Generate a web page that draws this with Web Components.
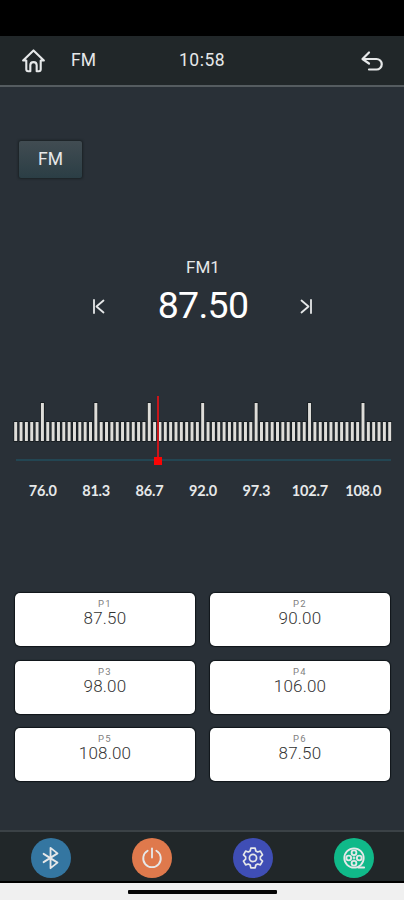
<!DOCTYPE html>
<html lang="en">
<head>
<meta charset="UTF-8">
<meta name="viewport" content="width=device-width, initial-scale=1">
<title>FM Radio</title>
<style>
  :root {
    --panel: #293037;
    --bar: #212729;
    --rule: #555c60;
    --text: #e6e8e9;
  }

  body {
    margin: 0;
    background: #000;
    font-family: Roboto, 'Liberation Sans', sans-serif;
    color: var(--text);
  }
</style>
</head>
<body>
<radio-app></radio-app>

<script>
function attach(el, html) {
  const template = document.createElement('template');
  template.innerHTML = html;
  el.attachShadow({ mode: 'open' }).appendChild(template.content.cloneNode(true));
}

const icons = {
  home: '<path d="M5.500 12.500H2.200L13 2l10.800 10.500h-3.300v9.200q0 2-2 2h-2.200v-6.200q0-3.300-3.300-3.300t-3.300 3.300v6.200H7.500q-2 0-2-2z"/>',
  back: '<path d="M9 2.500 2.500 9 9 13.500M3 9h13.500a5 5 0 0 1 0 10.500H9"/>',
  prev: '<path d="M2 1v13M11.500 1.500 4.500 7.500l7 6"/>',
  next: '<path d="M11 1v13M1.500 1.500l7 6-7 6"/>',
  bluetooth: '<path d="m5 8.500 15 9.500-7.500 6V2L20 8 5 17.500"/>',
  power: '<path d="M13 2.500v10M8.300 5.200a9.500 9.500 0 1 0 9.400 0"/>',
  gear: '<path d="M10.500 2.500h5l.8 3.300 2.100 1.200 3.200-1 2.500 4.300-2.500 2.300v2.800l2.500 2.300-2.500 4.300-3.200-1-2.100 1.200-.8 3.300h-5l-.8-3.300-2.100-1.200-3.200 1-2.500-4.300 2.500-2.300v-2.800l-2.500-2.300L4.400 6l3.200 1 2.100-1.200z"/><circle cx="13" cy="14" r="4.200"/>',
  reel: '<circle cx="13" cy="13" r="10.500"/><circle cx="13" cy="7.300" r="2.600"/><circle cx="7.300" cy="13" r="2.600"/><circle cx="18.700" cy="13" r="2.600"/><circle cx="13" cy="18.700" r="2.600"/><circle cx="13" cy="13" r=".5"/><path d="M17.500 23.300h6.500"/>'
};

class RadioIcon extends HTMLElement {
  connectedCallback() {
    const box = this.getAttribute('box') || '0 0 26 26';
    attach(this, `
      <style>
        :host { display: block; width: 24px; height: 24px; }
        svg {
          display: block;
          width: 100%;
          height: 100%;
          fill: none;
          stroke: currentColor;
          stroke-width: var(--stroke, 2.2);
          stroke-linecap: round;
          stroke-linejoin: round;
        }
      </style>
      <svg viewBox="${box}">${icons[this.getAttribute('name')]}</svg>
    `);
  }
}

class RadioHeader extends HTMLElement {
  connectedCallback() {
    attach(this, `
      <style>
        :host {
          display: grid;
          grid-template-columns: 50px 1fr auto 1fr 56px;
          align-items: center;
          box-sizing: border-box;
          height: 51px;
          padding-left: 21px;
          background: var(--bar);
          border-bottom: 2px solid var(--rule);
          font-size: 17.5px;
          line-height: 20px;
        }
        span { margin-top: -1px; }
        time { width: 49px; margin: -1px 0 0 -12px; letter-spacing: .5px; }
        .home { width: 25px; height: 26px; margin-top: 1px; }
        .back { width: 24px; height: 24px; margin: 3px 0 0 12px; }
      </style>
      <radio-icon class="home" name="home"></radio-icon>
      <span><slot></slot></span>
      <time>10:58</time>
      <span></span>
      <radio-icon class="back" name="back" box="0 0 24 24"></radio-icon>
    `);
  }
}

class BandButton extends HTMLElement {
  connectedCallback() {
    attach(this, `
      <style>
        :host {
          display: flex;
          align-items: center;
          justify-content: center;
          box-sizing: border-box;
          width: 65px;
          height: 39px;
          padding-bottom: 2px;
          border: 1px solid #1e2529;
          border-radius: 3px;
          background: linear-gradient(#414c52, #2b3e45);
          box-shadow: 0 0 2px #182024;
          font-size: 17.5px;
        }
      </style>
      <slot></slot>
    `);
  }
}

class StationDisplay extends HTMLElement {
  connectedCallback() {
    attach(this, `
      <style>
        :host {
          display: grid;
          grid-template-columns: 14px 1fr 14px;
          align-items: center;
          padding: 0 90px 0 92px;
          text-align: center;
        }
        .band {
          grid-column: 1 / -1;
          font-size: 17px;
          line-height: 20px;
          height: 25px;
        }
        .freq {
          font-size: 37.5px;
          line-height: 46px;
          letter-spacing: -.7px;
          color: #fff;
        }
        radio-icon { width: 13px; height: 15px; margin-top: 3px; --stroke: 1.8; }
      </style>
      <div class="band">${this.getAttribute('band')}</div>
      <radio-icon name="prev" box="0 0 13 15"></radio-icon>
      <div class="freq"><slot></slot></div>
      <radio-icon name="next" box="0 0 13 15"></radio-icon>
    `);
  }
}

class TunerScale extends HTMLElement {
  connectedCallback() {
    const labels = this.getAttribute('labels').split(' ');
    let ticks = '';
    // ten ticks per label, the tall one in the middle of each group
    for (let i = 0; i <= labels.length * 10; i++) {
      const tall = i % 10 === 5;
      ticks += `<rect x="${(i * 5.343 + .2).toFixed(2)}" y="${tall ? 0 : 19}" width="3" height="${tall ? 38 : 19}"/>`;
    }
    attach(this, `
      <style>
        :host { display: block; position: relative; padding: 6px 13px 0 14px; }
        svg { display: block; width: 377px; height: 38px; overflow: visible; }
        rect { fill: #deddd9; stroke: #12171a; stroke-width: 1.4; paint-order: stroke; }
        .track { height: 2px; margin: 18px 0 0 2px; background: #234653; }
        .labels {
          display: grid;
          grid-template-columns: repeat(7, 53.43px);
          margin: 19px 0 0 2px;
          font: 700 14.5px/22px Lato, 'Liberation Sans', sans-serif;
          text-align: center;
          letter-spacing: -.2px;
        }
        .needle {
          position: absolute;
          left: 157px;
          top: -1px;
          width: 1.5px;
          height: 64px;
          background: #c9161b;
        }
        .needle::after {
          content: '';
          position: absolute;
          left: -3px;
          bottom: -5px;
          width: 8px;
          height: 8px;
          background: #fb0505;
        }
      </style>
      <svg viewBox="0 0 377 38">${ticks}</svg>
      <div class="track"></div>
      <div class="labels">${labels.map(l => `<span>${l}</span>`).join('')}</div>
      <div class="needle"></div>
    `);
  }
}

class PresetButton extends HTMLElement {
  connectedCallback() {
    attach(this, `
      <style>
        :host {
          display: block;
          box-sizing: border-box;
          height: 53px;
          padding-top: 5px;
          border-radius: 5px;
          background: #fff;
          box-shadow: 0 0 1px 1px #10161a;
          text-align: center;
          color: #333;
        }
        .name { font-size: 9.5px; line-height: 11px; letter-spacing: 1.4px; color: #808080; }
        .freq { font-size: 17px; font-weight: 300; line-height: 19px; letter-spacing: .2px; }
      </style>
      <div class="name">${this.getAttribute('name')}</div>
      <div class="freq"><slot></slot></div>
    `);
  }
}

class DockButton extends HTMLElement {
  connectedCallback() {
    attach(this, `
      <style>
        :host {
          display: flex;
          align-items: center;
          justify-content: center;
          width: 40px;
          height: 40px;
          border-radius: 50%;
          --stroke: 2;
        }
      </style>
      <radio-icon name="${this.getAttribute('icon')}" box="${this.getAttribute('box') || '0 0 26 26'}"></radio-icon>
    `);
  }
}

class RadioApp extends HTMLElement {
  connectedCallback() {
    attach(this, `
      <style>
        :host {
          display: flex;
          flex-direction: column;
          box-sizing: border-box;
          width: 404px;
          height: 900px;
          padding-top: 36px;
          overflow: hidden;
        }
        main {
          display: flex;
          flex-direction: column;
          box-sizing: border-box;
          height: 743px;
          padding-top: 53px;
          background: var(--panel);
        }
        band-button { margin-left: 18px; }
        station-display { margin-top: 78px; }
        tuner-scale { margin-top: 69px; }
        .presets {
          display: grid;
          grid-template-columns: 1fr 1fr;
          gap: 14.5px 15px;
          padding: 0 14px 0 15px;
          margin-top: 91px;
        }
        footer {
          display: flex;
          justify-content: space-between;
          align-items: center;
          box-sizing: border-box;
          height: 53px;
          padding: 2px 30px 0 31px;
          border-top: 2px solid #3b4246;
          border-bottom: 2px solid #000;
          background: var(--bar);
        }
        .system {
          display: flex;
          justify-content: center;
          flex: 1;
          background: #f0f0f0;
        }
        .system i { width: 149px; height: 4px; margin-top: 7px; border-radius: 1px; background: #050505; }
      </style>
      <radio-header>FM</radio-header>
      <main>
        <band-button>FM</band-button>
        <station-display band="FM1">87.50</station-display>
        <tuner-scale labels="76.0 81.3 86.7 92.0 97.3 102.7 108.0"></tuner-scale>
        <section class="presets">
          <preset-button name="P1">87.50</preset-button>
          <preset-button name="P2">90.00</preset-button>
          <preset-button name="P3">98.00</preset-button>
          <preset-button name="P4">106.00</preset-button>
          <preset-button name="P5">108.00</preset-button>
          <preset-button name="P6">87.50</preset-button>
        </section>
      </main>
      <footer>
        <dock-button icon="bluetooth" style="background:#3476a1"></dock-button>
        <dock-button icon="power" style="background:#df794c"></dock-button>
        <dock-button icon="gear" box="0 0 26 28" style="background:#3f4eb5"></dock-button>
        <dock-button icon="reel" style="background:#10b989"></dock-button>
      </footer>
      <div class="system"><i></i></div>
    `);
  }
}

customElements.define('radio-icon', RadioIcon);
customElements.define('radio-header', RadioHeader);
customElements.define('band-button', BandButton);
customElements.define('station-display', StationDisplay);
customElements.define('tuner-scale', TunerScale);
customElements.define('preset-button', PresetButton);
customElements.define('dock-button', DockButton);
customElements.define('radio-app', RadioApp);
</script>
</body>
</html>
